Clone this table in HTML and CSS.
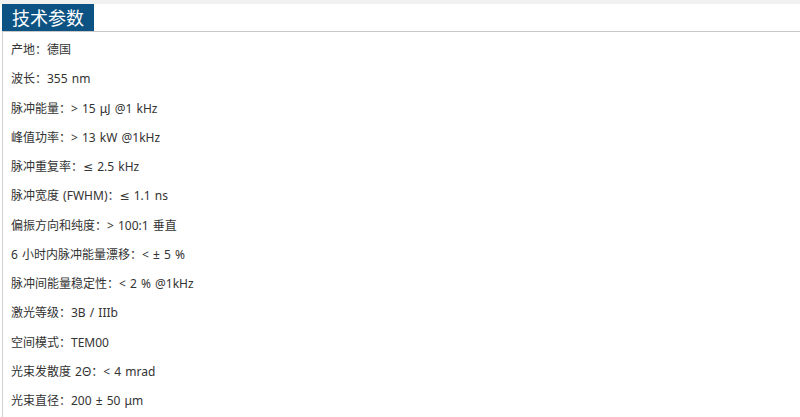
FILE: index.html
```html
<!DOCTYPE html>
<html lang="zh">
<head>
<meta charset="utf-8">
<link rel="stylesheet" href="styles.css">
</head>
<body>
<div class="topstrip"></div>
<div class="wrap">
  <div class="head"><h2 class="title">技术参数</h2></div>
  <div class="panel">
    <p class="row">产地：德国</p>
    <p class="row">波长：355 nm</p>
    <p class="row">脉冲能量：&gt; 15 μJ @1 kHz</p>
    <p class="row">峰值功率：&gt; 13 kW @1kHz</p>
    <p class="row">脉冲重复率：≤ 2.5 kHz</p>
    <p class="row">脉冲宽度 (FWHM)：≤ 1.1 ns</p>
    <p class="row">偏振方向和纯度：&gt; 100:1 垂直</p>
    <p class="row">6 小时内脉冲能量漂移：&lt; ± 5 %</p>
    <p class="row">脉冲间能量稳定性：&lt; 2 % @1kHz</p>
    <p class="row">激光等级：3B / IIIb</p>
    <p class="row">空间模式：TEM00</p>
    <p class="row">光束发散度 2Θ：&lt; 4 mrad</p>
    <p class="row">光束直径：200 ± 50 μm</p>
  </div>
</div>
</body>
</html>
```
FILE: styles.css
```css
html, body {
  margin: 0;
  padding: 0;
  background: #fff;
  font-family: "Noto Sans", "DejaVu Sans", "Noto Sans CJK SC", sans-serif;
  color: #333;
}
.topstrip {
  height: 4px;
  background: #f1f1f1;
}
.wrap {
  padding-left: 2px;
}
.head {
  display: flex;
  height: 27px;
}
.title {
  margin: 0;
  width: 92px;
  box-sizing: border-box;
  padding-left: 10px;
  background: #0c5282;
  color: #fff;
  font-family: "Noto Sans CJK SC", sans-serif;
  font-size: 18px;
  font-weight: normal;
  line-height: 27px;
}
.panel {
  border-top: 1px solid #c8c8c8;
  border-left: 1px solid #d0d0d0;
  padding: 3px 0 0 8px;
  height: 400px;
}
.row {
  margin: 0;
  height: 29.25px;
  line-height: 29.25px;
  font-size: 12px;
  word-spacing: 1px;
}
```
